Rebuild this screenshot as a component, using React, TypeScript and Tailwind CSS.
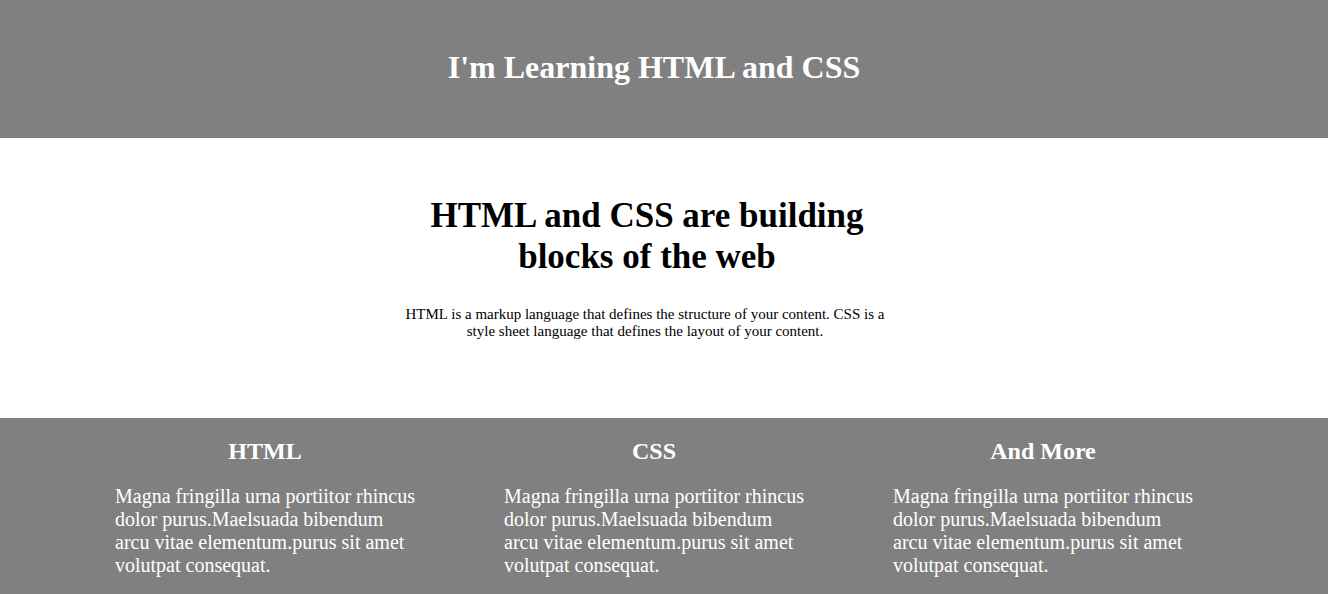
export default function App() {
  const cols = ["HTML", "CSS", "And More"];
  return (
    <div className="min-h-[594px] bg-[#808080] font-['Liberation_Serif',serif]">
      <header className="bg-[#808080] h-[138px] flex items-center justify-center pr-[20px] pb-[4px]">
        <h1 className="text-[32px] leading-[37px] font-bold text-white">I'm Learning HTML and CSS</h1>
      </header>
      <section className="bg-white h-[280px] flex justify-center pr-[38px] pt-[57px]">
        <div className="w-[490px] text-center text-black">
          <h2 className="text-[35px] leading-[41px] font-bold pl-[4px]">HTML and CSS are building blocks of the web</h2>
          <p className="mt-[29px] text-[15px] leading-[17px]">
            HTML is a markup language that defines the structure of your content. CSS is a style sheet language that defines the layout of your content.
          </p>
        </div>
      </section>
      <section className="bg-[#808080] flex justify-center gap-[89px] pr-[20px] pt-[19px] pb-[16px]">
        {cols.map((c) => (
          <div key={c} className="w-[300px] text-white">
            <h3 className="text-center text-[24px] leading-[28px] font-bold">{c}</h3>
            <p className="mt-[20px] text-[20px] leading-[23px]">
              Magna fringilla urna portiitor rhincus dolor purus.Maelsuada bibendum arcu vitae elementum.purus sit amet volutpat consequat.
            </p>
          </div>
        ))}
      </section>
    </div>
  );
}
